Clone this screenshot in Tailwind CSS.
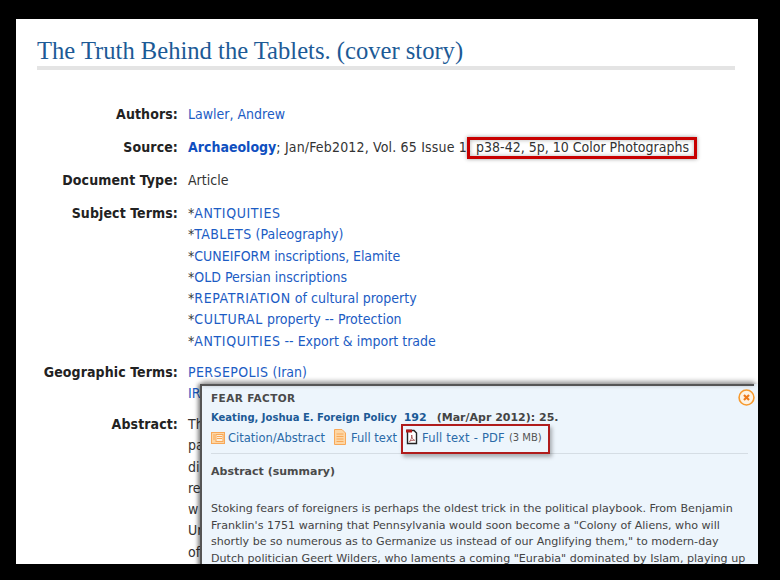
<!DOCTYPE html>
<html lang="en">
<head>
  <meta charset="UTF-8" />
  <title>The Truth Behind the Tablets</title>
  <script src="https://cdn.jsdelivr.net/npm/@tailwindcss/browser@4"></script>
</head>
<body class="bg-black w-[780px] h-[580px] overflow-hidden">
  <div class="pt-[19px] pl-[16px]">
    <main class="relative w-[742px] h-[545px] bg-white overflow-hidden pl-[21px] pt-[17px] font-['DejaVu_Sans_Condensed','DejaVu_Sans',sans-serif] text-[14px] leading-[21.3px] text-[#333]">
      <h1 class="w-[698px] h-[34px] border-b-[4px] border-[#e4e4e4] font-['Liberation_Serif',serif] text-[24.6px] leading-[29px] text-[#1c5a96]">The Truth Behind the Tablets. (cover story)</h1>

      <dl class="mt-[34px] grid grid-cols-[141px_1fr] gap-x-[10px] gap-y-[9.7px]">
        <dt class="text-right font-bold tracking-[0.1px] text-[#222]">Authors:</dt>
        <dd class="mb-[2px] text-[#1c5cc4]">Lawler, Andrew</dd>

        <dt class="text-right font-bold tracking-[0.1px] text-[#222]">Source:</dt>
        <dd class="mb-[2px]"><b class="text-[#0f4fc0]">Archaeology</b><span class="tracking-[0.17px]">; Jan/Feb2012, Vol. 65 Issue 1,</span> <span class="relative ml-[1px]">p38-42, 5p, 10 Color Photographs<span class="absolute left-[-9px] right-[-8px] top-[-2px] bottom-[-4px] border-[3px] border-[#c80000] shadow-[0_0_4px_rgba(0,0,0,0.4),inset_0_0_4px_rgba(0,0,0,0.3)]"></span></span></dd>

        <dt class="text-right font-bold tracking-[0.1px] text-[#222]">Document Type:</dt>
        <dd class="mb-[2px]">Article</dd>

        <dt class="text-right font-bold tracking-[0.1px] text-[#222]">Subject Terms:</dt>
        <dd class="text-[#1c5cc4]">
          <p><span class="text-[#333]">*</span><span class="tracking-[0.6px]">ANTIQUITIES</span></p>
          <p><span class="text-[#333]">*</span><span class="tracking-[0.4px]">TABLETS</span> (Paleography)</p>
          <p><span class="text-[#333]">*</span>CUNEIFORM <span class="tracking-[-0.1px]">inscriptions, Elamite</span></p>
          <p><span class="text-[#333]">*</span>OLD Persian inscriptions</p>
          <p><span class="text-[#333]">*</span><span class="tracking-[0.6px]">REPATRIATION</span> of cultural property</p>
          <p><span class="text-[#333]">*</span><span class="tracking-[0.6px]">CULTURAL</span> property -- Protection</p>
          <p><span class="text-[#333]">*</span><span class="tracking-[0.6px]">ANTIQUITIES</span> -- Export &amp; import trade</p>
        </dd>

        <dt class="text-right font-bold tracking-[0.1px] text-[#222]">Geographic Terms:</dt>
        <dd class="text-[#1c5cc4]">
          <p><span class="tracking-[0.4px]">PERSEPOLIS</span> (Iran)</p>
          <p>IR</p>
        </dd>

        <dt class="text-right font-bold tracking-[0.1px] text-[#222]">Abstract:</dt>
        <dd class="whitespace-nowrap">
          <p>Th</p>
          <p>pa</p>
          <p>di</p>
          <p>re</p>
          <p>w</p>
          <p>Ur</p>
          <p>of</p>
        </dd>
      </dl>

      <!-- popup record, sits over the abstract -->
      <section class="absolute left-[184px] top-[365px] w-[558px] h-[200px] bg-[#edf5fc] border-l-[2px] border-[#555] shadow-[-2px_0_4px_rgba(0,0,0,0.5)] pl-[9px] pr-[8px] pt-[6px] font-['DejaVu_Sans',sans-serif] text-[11px] text-[#444]">
        <div class="absolute left-0 top-0 right-[4px] h-[2px] bg-[#555] shadow-[0_-2px_5px_rgba(0,0,0,0.6)]"></div>
        <button class="absolute right-[3px] top-[5px] w-[17px] h-[17px]">
          <svg viewBox="0 0 16 16" class="w-[17px] h-[17px]"><circle cx="8" cy="8" r="7" fill="#fdf3e4" stroke="#f79a2e" stroke-width="1.5"/><path d="M5.6 5.6l4.8 4.8M10.4 5.6l-4.8 4.8" stroke="#ee7a1a" stroke-width="2"/></svg>
        </button>
        <h2 class="font-bold text-[10.5px] leading-[17px] text-[#4a4a4a] tracking-[0.4px]">FEAR FACTOR</h2>
        <p class="mt-[2px] font-bold leading-[17px] text-[#444] whitespace-nowrap"><span class="text-[10px] text-[#1c5a96]">Keating, Joshua E. Foreign Policy</span><span class="ml-[7px] text-[#1c5a96]">192</span><span class="ml-[10px]">(Mar/Apr 2012): 25.</span></p>
        <div class="mt-[3px] flex items-center text-[11.5px] text-[#2a6aa8] leading-[18px]">
          <svg viewBox="0 0 14 14" class="w-[14px] h-[14px] mr-[3px]"><rect x="0.5" y="1.5" width="13" height="11" fill="#fdd6a4" stroke="#f8a858"/><rect x="5" y="3.5" width="7" height="7" fill="#fdeeda" stroke="#f8a858"/><path d="M6 5.5h5M6 7.5h5M2 4h2M2 6h2M2 8h2" stroke="#f8a858"/></svg>
          <span>Citation/Abstract</span>
          <svg viewBox="0 0 12 16" class="w-[12px] h-[16px] ml-[9px] mr-[5px] -mt-[3px]"><path d="M0.5 0.5H8l3.5 3.5v11.5H0.5z" fill="#fdd6a4" stroke="#f8a858"/><path d="M2.5 5h7M2.5 7.5h7M2.5 10h7M2.5 12.5h7" stroke="#f8a858"/></svg>
          <span>Full text</span>
          <svg viewBox="0 0 12 16" class="w-[12px] h-[16px] ml-[9px] mr-[4px] -mt-[2px]"><path d="M1.5 1.5h6.5l2.5 2.5v10.5h-9z" fill="#fff" stroke="#222" stroke-width="1.4"/><path d="M0 0.5h6v3H0z" fill="#b01818"/><path d="M3.5 12.5c2-2 2.5-4.5 2.2-6.5c-.2 2 1 5 3 5.3c-2-.2-4 .2-5.2 1.2z" fill="none" stroke="#a04040" stroke-width=".8"/></svg>
          <span class="tracking-[0.2px]">Full text - PDF</span>
          <span class="ml-[4px] text-[10px] text-[#555]">(3 MB)</span>
        </div>
        <div class="absolute left-[199px] top-[40px] w-[149px] h-[30px] border-2 border-[#b01c1c] shadow-[2px_3px_4px_rgba(0,0,0,0.3)]"></div>
        <hr class="mt-[6px] w-[537px] border-t border-[#d5dde4]" />
        <h3 class="mt-[9px] font-bold leading-[17px] text-[#4a4a4a]">Abstract (summary)</h3>
        <div class="mt-[21px] text-[11.1px] leading-[16.5px] whitespace-nowrap text-[#444]">
          <p>Stoking fears of foreigners is perhaps the oldest trick in the political playbook. From Benjamin</p>
          <p>Franklin's 1751 warning that Pennsylvania would soon become a "Colony of Aliens, who will</p>
          <p>shortly be so numerous as to Germanize us instead of our Anglifying them," to modern-day</p>
          <p>Dutch politician Geert Wilders, who laments a coming "Eurabia" dominated by Islam, playing up</p>
        </div>
      </section>
    </main>
  </div>
</body>
</html>
